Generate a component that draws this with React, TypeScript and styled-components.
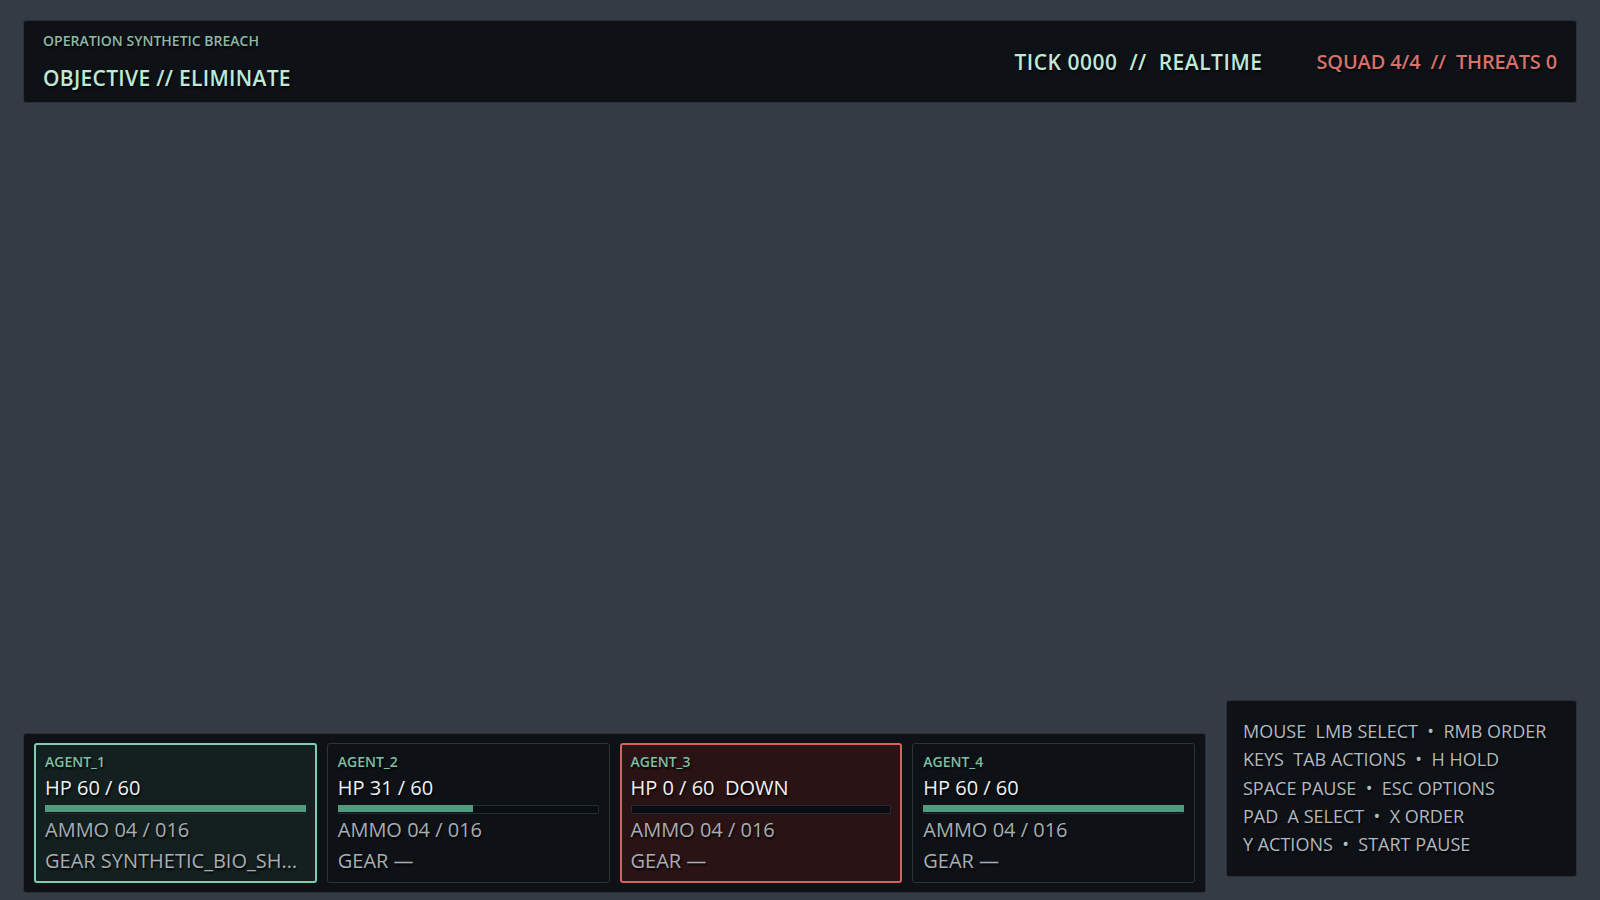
import React from 'react';
import styled, {createGlobalStyle} from 'styled-components';

const GlobalStyle = createGlobalStyle`
  html, body {
    margin: 0;
    padding: 0;
    background: #353b44;
  }
  body {
    font-family: "Open Sans", "Noto Sans", sans-serif;
  }
`;

type Tone = 'ok' | 'idle' | 'down';

interface Agent {
    id: string;
    hp: number;
    maxHp: number;
    ammo: string;
    gear: string;
    tone: Tone;
}

const agents: Agent[] = [
    {id: 'AGENT_1', hp: 60, maxHp: 60, ammo: '04 / 016', gear: 'SYNTHETIC_BIO_SHIELD', tone: 'ok'},
    {id: 'AGENT_2', hp: 31, maxHp: 60, ammo: '04 / 016', gear: '—', tone: 'idle'},
    {id: 'AGENT_3', hp: 0, maxHp: 60, ammo: '04 / 016', gear: '—', tone: 'down'},
    {id: 'AGENT_4', hp: 60, maxHp: 60, ammo: '04 / 016', gear: '—', tone: 'idle'},
];

const controls: string[] = [
    'MOUSE  LMB SELECT  •  RMB ORDER',
    'KEYS  TAB ACTIONS  •  H HOLD',
    'SPACE PAUSE  •  ESC OPTIONS',
    'PAD  A SELECT  •  X ORDER',
    'Y ACTIONS  •  START PAUSE',
];

const shadow = '1px 2px 2px rgba(0, 0, 0, 0.9)';

const Screen = styled.div`
  box-sizing: border-box;
  height: 100vh;
  padding: 20px 23px 7px;
  display: flex;
  flex-direction: column;
  justify-content: space-between;
  text-shadow: ${shadow};
`;

const Panel = styled.div`
  box-sizing: border-box;
  background: #0e1217;
  border: 1px solid #2a3038;
  border-radius: 3px;
`;

const TopBar = styled(Panel)`
  height: 83px;
  padding: 12px 19px 0;
  display: flex;
  justify-content: space-between;
  align-items: center;
`;

const Mission = styled.div`
  display: flex;
  flex-direction: column;
  align-self: flex-start;
`;

const Operation = styled.span`
  font-size: 14px;
  line-height: 16px;
  font-weight: 600;
  color: #8fb8a7;
`;

const Objective = styled.span`
  margin-top: 16px;
  font-size: 21px;
  line-height: 26px;
  font-weight: 600;
  letter-spacing: 0.3px;
  color: #bfe8d6;
`;

const Status = styled.div`
  display: flex;
  align-items: center;
  gap: 54px;
  margin-top: -12px;
`;

const StatusText = styled.span<{ $alert?: boolean }>`
  font-size: ${p => (p.$alert ? '20px' : '21px')};
  font-weight: 600;
  white-space: pre;
  letter-spacing: ${p => (p.$alert ? '-0.15px' : '0.5px')};
  color: ${p => (p.$alert ? '#d7716b' : '#bfe8d6')};
`;

const BottomRow = styled.div`
  display: flex;
  align-items: flex-end;
  gap: 20px;
`;

const Squad = styled(Panel)`
  flex: 1;
  padding: 9px 10px;
  display: grid;
  grid-template-columns: repeat(4, 1fr);
  gap: 10px;
`;

const cardTheme: Record<Tone, { bg: string; border: string }> = {
    ok: {bg: '#14201f', border: '#7fcdb0'},
    idle: {bg: '#0e1217', border: '#2c333b'},
    down: {bg: '#2a1315', border: '#d4625f'},
};

const Card = styled.div<{ $tone: Tone }>`
  box-sizing: border-box;
  height: 140px;
  min-width: 0;
  padding: ${p => (p.$tone === 'idle' ? '10px 10px 0' : '9px 9px 0')};
  border-radius: 3px;
  background: ${p => cardTheme[p.$tone].bg};
  border: ${p => (p.$tone === 'idle' ? '1px' : '2px')} solid ${p => cardTheme[p.$tone].border};
  display: flex;
  flex-direction: column;
`;

const AgentId = styled.span`
  font-size: 14px;
  line-height: 16px;
  font-weight: 600;
  color: #7fbfa4;
`;

const Health = styled.span`
  margin-top: 6px;
  font-size: 20px;
  line-height: 24px;
  font-weight: 500;
  white-space: pre;
  color: #eef1f3;
`;

const Track = styled.div`
  box-sizing: border-box;
  margin-top: 5px;
  height: 9px;
  background: #0a0d11;
  border: 1px solid #252b32;
  border-radius: 1px;
`;

const Fill = styled.div`
  height: 100%;
  margin: -1px;
  background: #4f9c7f;
`;

const Detail = styled.span<{ $gap: number }>`
  margin-top: ${p => p.$gap}px;
  font-size: 20px;
  line-height: 28px;
  color: #a7adb2;
  white-space: nowrap;
`;

const Truncated = styled(Detail)`
  padding-right: 8px;
  overflow: hidden;
  text-overflow: ellipsis;
`;

const Help = styled(Panel)`
  width: 351px;
  height: 177px;
  margin-bottom: 16px;
  padding: 16px 16px 0;
  display: flex;
  flex-direction: column;
`;

const HelpLine = styled.span`
  font-size: 18px;
  line-height: 28.33px;
  font-weight: 500;
  color: #b3b9be;
  white-space: pre;
`;

const AgentCard: React.FC<{ agent: Agent }> = ({agent}) => {
    const pct = (agent.hp / agent.maxHp) * 100;
    return (
        <Card $tone={agent.tone}>
            <AgentId>{agent.id}</AgentId>
            <Health>
                HP {agent.hp} / {agent.maxHp}{agent.hp === 0 ? '  DOWN' : ''}
            </Health>
            <Track>
                {pct > 0 && <Fill style={{width: `calc(${pct}% + 2px)`}}/>}
            </Track>
            <Detail $gap={2}>AMMO {agent.ammo}</Detail>
            <Truncated $gap={3}>GEAR {agent.gear}</Truncated>
        </Card>
    );
};

const App: React.FC = () => {
    return (
        <>
            <GlobalStyle/>
            <Screen>
                <TopBar>
                    <Mission>
                        <Operation>OPERATION SYNTHETIC BREACH</Operation>
                        <Objective>OBJECTIVE // ELIMINATE</Objective>
                    </Mission>
                    <Status>
                        <StatusText>TICK 0000  //  REALTIME</StatusText>
                        <StatusText $alert>SQUAD 4/4  //  THREATS 0</StatusText>
                    </Status>
                </TopBar>
                <BottomRow>
                    <Squad>
                        {agents.map(a => <AgentCard key={a.id} agent={a}/>)}
                    </Squad>
                    <Help>
                        {controls.map(line => <HelpLine key={line}>{line}</HelpLine>)}
                    </Help>
                </BottomRow>
            </Screen>
        </>
    );
};

export default App;
